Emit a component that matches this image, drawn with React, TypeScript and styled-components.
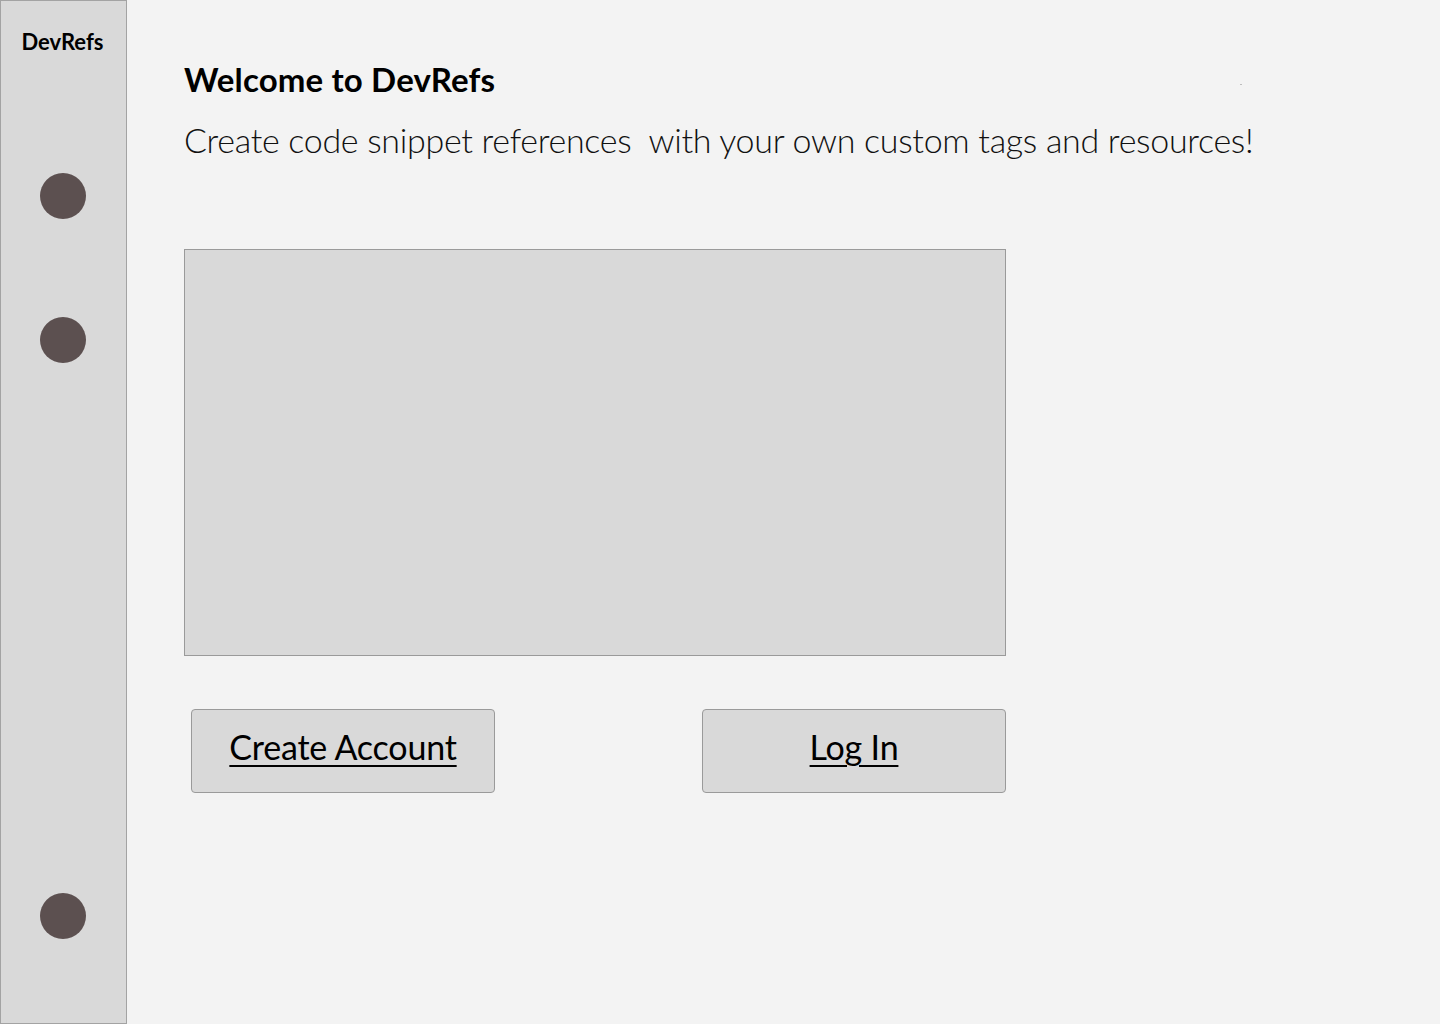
import React from "react";
import styled, { createGlobalStyle } from "styled-components";

const Global = createGlobalStyle`
  html, body { margin: 0; padding: 0; }
  body {
    background: #f3f3f3;
    font-family: Lato, "Open Sans", sans-serif;
    color: #000;
  }
`;

const Page = styled.div`
  display: flex;
  width: 1440px;
  height: 1024px;
  background: #f3f3f3;
  position: relative;
  overflow: hidden;
`;

const Sidebar = styled.nav`
  box-sizing: border-box;
  width: 127px;
  height: 1024px;
  background: #d9d9d9;
  border: 1px solid #a3a3a3;
  padding-right: 2px;
  display: flex;
  flex-direction: column;
  align-items: center;
  flex-shrink: 0;
`;

const Brand = styled.div`
  font-family: Lato, sans-serif;
  font-weight: 700;
  font-size: 22px;
  margin-top: 28px;
  line-height: 26px;
`;

const Dot = styled.span<{ $top: number }>`
  display: block;
  width: 46px;
  height: 46px;
  border-radius: 50%;
  background: #5c5050;
  margin-top: ${(p) => p.$top}px;
`;

const Main = styled.main`
  flex: 1;
  padding: 59px 0 0 57px;
  display: flex;
  flex-direction: column;
`;

const Title = styled.h1`
  margin: 0;
  font-family: Lato, sans-serif;
  font-weight: 700;
  font-size: 33px;
  letter-spacing: 0.15px;
  line-height: 40px;
`;

const Subtitle = styled.p`
  margin: 19px 0 0;
  font-family: Lato, sans-serif;
  font-weight: 300;
  font-size: 34px;
  letter-spacing: -0.3px;
  line-height: 44px;
  color: #111;
  white-space: pre;
`;

const Preview = styled.div`
  box-sizing: border-box;
  width: 822px;
  height: 407px;
  margin-top: 87px;
  background: #d9d9d9;
  border: 1px solid #9a9a9a;
`;

const Actions = styled.div`
  display: flex;
  justify-content: space-between;
  width: 815px;
  margin: 53px 0 0 7px;
`;

const Button = styled.button`
  box-sizing: border-box;
  width: 304px;
  height: 84px;
  background: #d9d9d9;
  border: 1px solid #9a9a9a;
  border-radius: 4px;
  font-family: Lato, sans-serif;
  font-size: 34px;
  font-weight: 400;
  letter-spacing: -0.2px;
  color: #000;
  text-decoration: underline;
  text-underline-offset: 5px;
  text-decoration-thickness: 2px;
  cursor: pointer;
  padding: 0 0 9px;
`;

const Speck = styled.span`
  position: absolute;
  left: 1240px;
  top: 84px;
  width: 2px;
  height: 1px;
  background: #bdbdbd;
`;

export default function App() {
  return (
    <>
      <Global />
      <Page>
        <Sidebar>
          <Brand>DevRefs</Brand>
          <Dot $top={118} />
          <Dot $top={98} />
          <Dot $top={530} />
        </Sidebar>
        <Main>
          <Title>Welcome to DevRefs</Title>
          <Subtitle>{"Create code snippet references  with your own custom tags and resources!"}</Subtitle>
          <Preview />
          <Actions>
            <Button>Create Account</Button>
            <Button>Log In</Button>
          </Actions>
        </Main>
        <Speck />
      </Page>
    </>
  );
}
